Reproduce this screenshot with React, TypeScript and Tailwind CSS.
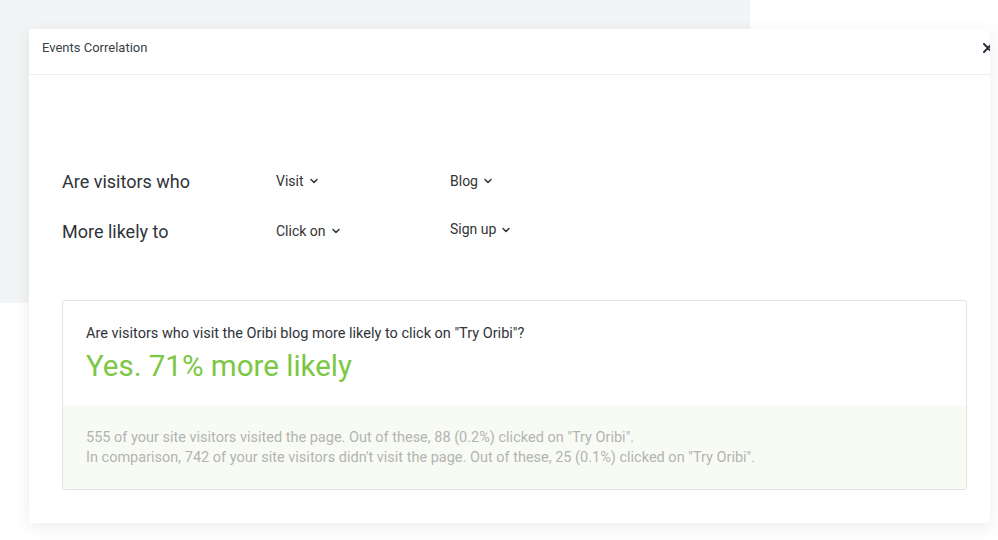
import { ChevronDown } from 'lucide-react'

function Picker({ label, className = '' }: { label: string; className?: string }) {
  return (
    <button className={`flex items-center gap-1 text-[14px] text-[#333] ${className}`}>
      {label}
      <ChevronDown className="w-3 h-3" strokeWidth={3} />
    </button>
  )
}

export default function App() {
  return (
    <div
      className="w-[998px] h-[540px] overflow-hidden bg-white bg-[linear-gradient(#f3f4f6,#f3f4f6)] bg-no-repeat bg-[length:750px_303px] pt-[29px] pl-[29px]"
      style={{ fontFamily: 'Roboto, "Liberation Sans", sans-serif' }}
    >
      <div className="w-[961px] h-[494px] bg-white overflow-hidden shadow-[0_4px_16px_rgba(0,0,0,0.08)]">
        <div className="h-[46px] flex items-center justify-between pl-[13px] pb-[8px] border-b border-[#ececec]">
          <span className="text-[13px] text-[#3a3f47]">Events Correlation</span>
          <svg className="w-[10px] h-[10px] mr-[-3px] text-[#2d3440]" viewBox="0 0 10 10">
            <path d="M1 1 L9 9 M9 1 L1 9" stroke="currentColor" strokeWidth="2" strokeLinecap="round" />
          </svg>
        </div>

        <div className="px-[33px] pt-[81px]">
          <div className="grid grid-cols-[214px_174px_auto] items-center h-[50px]">
            <span className="text-[18px] text-[#2f333a]">Are visitors who</span>
            <Picker label="Visit" />
            <Picker label="Blog" />
          </div>
          <div className="grid grid-cols-[214px_174px_auto] items-center h-[50px]">
            <span className="text-[18px] text-[#2f333a]">More likely to</span>
            <Picker label="Click on" />
            <Picker label="Sign up" className="-mt-[3px]" />
          </div>

          <div className="mt-[44px] w-[905px] h-[190px] border border-[#e2e2e2] rounded-[3px] overflow-hidden flex flex-col">
            <div className="px-[23px] pt-[23px] h-[105px]">
              <p className="text-[14.5px] leading-[20px] text-[#2f333a]">
                Are visitors who visit the Oribi blog more likely to click on "Try Oribi"?
              </p>
              <p className="text-[29.5px] leading-[36px] text-[#7cc744] mt-[4px]">Yes. 71% more likely</p>
            </div>
            <div className="flex-1 bg-[#f8fbf4] px-[23px] pt-[22px] text-[14.5px] leading-[20px] text-[#b3b3b3]">
              <p>555 of your site visitors visited the page. Out of these, 88 (0.2%) clicked on "Try Oribi".</p>
              <p>In comparison, 742 of your site visitors didn't visit the page. Out of these, 25 (0.1%) clicked on "Try Oribi".</p>
            </div>
          </div>
        </div>
      </div>
    </div>
  )
}
